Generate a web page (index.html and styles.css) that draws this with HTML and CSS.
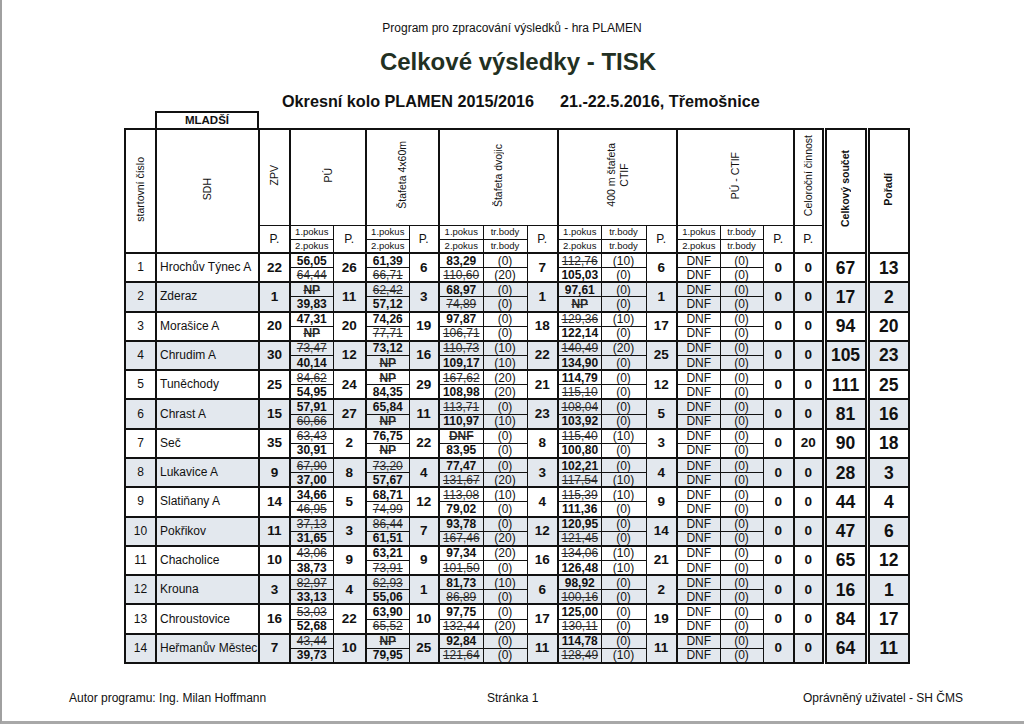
FILE: index.html
```html
<!DOCTYPE html>
<html lang="cs">
<head>
<meta charset="utf-8">
<title>Celkové výsledky - TISK</title>
<link rel="stylesheet" href="styles.css">
</head>
<body>
<div class="page">
  <div class="prog">Program pro zpracování výsledků - hra PLAMEN</div>
  <h1 class="title">Celkové výsledky - TISK</h1>
  <div class="sub"><span>Okresní kolo PLAMEN 2015/2016</span><span>21.-22.5.2016, Třemošnice</span></div>
  <div class="sheet">
    <div class="cat">MLADŠÍ</div>
    <table class="res">
      <colgroup>
        <col class="w31"><col class="w103"><col class="w31">
        <col class="w43"><col class="w33">
        <col class="w43"><col class="w30">
        <col class="w44"><col class="w44"><col class="w31">
        <col class="w43"><col class="w45"><col class="w31">
        <col class="w43"><col class="w43"><col class="w31">
        <col class="w30"><col class="w43"><col class="w42">
      </colgroup>
      <thead>
        <tr class="h1">
          <th rowspan="3"><div class="rot">startovní číslo</div></th>
          <th rowspan="3" class="gl"><div class="rot">SDH</div></th>
          <th class="gl"><div class="rot">ZPV</div></th>
          <th colspan="2" class="gl"><div class="rot">PÚ</div></th>
          <th colspan="2" class="gl"><div class="rot">Štafeta 4x60m</div></th>
          <th colspan="3" class="gl"><div class="rot">Štafeta dvojic</div></th>
          <th colspan="3" class="gl"><div class="rot">400 m štafeta<br>CTIF</div></th>
          <th colspan="3" class="gl"><div class="rot">PÚ - CTIF</div></th>
          <th class="gl"><div class="rot">Celoroční činnost</div></th>
          <th rowspan="3" class="dbl"><div class="rot bold">Celkový součet</div></th>
          <th rowspan="3" class="dbl"><div class="rot bold">Pořadí</div></th>
        </tr>
        <tr class="h2">
          <th rowspan="2" class="hp gl">P.</th>
          <th class="sm gl">1.pokus</th><th rowspan="2" class="hp">P.</th>
          <th class="sm gl">1.pokus</th><th rowspan="2" class="hp">P.</th>
          <th class="sm gl">1.pokus</th><th class="sm">tr.body</th><th rowspan="2" class="hp">P.</th>
          <th class="sm gl">1.pokus</th><th class="sm">tr.body</th><th rowspan="2" class="hp">P.</th>
          <th class="sm gl">1.pokus</th><th class="sm">tr.body</th><th rowspan="2" class="hp">P.</th>
          <th rowspan="2" class="hp gl">P.</th>
        </tr>
        <tr class="h3">
          <th class="sm gl">2.pokus</th>
          <th class="sm gl">2.pokus</th>
          <th class="sm gl">2.pokus</th><th class="sm">tr.body</th>
          <th class="sm gl">2.pokus</th><th class="sm">tr.body</th>
          <th class="sm gl">2.pokus</th><th class="sm">tr.body</th>
        </tr>
      </thead>
      <tbody>
        <!-- 1 -->
        <tr class="a">
          <td rowspan="2" class="num">1</td><td rowspan="2" class="name gl">Hrochův Týnec A</td><td rowspan="2" class="pt gl">22</td>
          <td class="v b gl">56,05</td><td rowspan="2" class="pt">26</td>
          <td class="v b gl">61,39</td><td rowspan="2" class="pt">6</td>
          <td class="v b gl">83,29</td><td class="t">(0)</td><td rowspan="2" class="pt">7</td>
          <td class="v x gl">112,76</td><td class="t">(10)</td><td rowspan="2" class="pt">6</td>
          <td class="v gl">DNF</td><td class="t">(0)</td><td rowspan="2" class="pt">0</td>
          <td rowspan="2" class="pt gl">0</td><td rowspan="2" class="sum dbl">67</td><td rowspan="2" class="sum dbl">13</td>
        </tr>
        <tr class="b">
          <td class="v x gl">64,44</td><td class="v x gl">66,71</td>
          <td class="v x gl">110,60</td><td class="t">(20)</td>
          <td class="v b gl">105,03</td><td class="t">(0)</td>
          <td class="v gl">DNF</td><td class="t">(0)</td>
        </tr>
        <!-- 2 -->
        <tr class="a sh">
          <td rowspan="2" class="num">2</td><td rowspan="2" class="name gl">Zderaz</td><td rowspan="2" class="pt gl">1</td>
          <td class="v xb gl">NP</td><td rowspan="2" class="pt">11</td>
          <td class="v x gl">62,42</td><td rowspan="2" class="pt">3</td>
          <td class="v b gl">68,97</td><td class="t">(0)</td><td rowspan="2" class="pt">1</td>
          <td class="v b gl">97,61</td><td class="t">(0)</td><td rowspan="2" class="pt">1</td>
          <td class="v gl">DNF</td><td class="t">(0)</td><td rowspan="2" class="pt">0</td>
          <td rowspan="2" class="pt gl">0</td><td rowspan="2" class="sum dbl">17</td><td rowspan="2" class="sum dbl">2</td>
        </tr>
        <tr class="b sh">
          <td class="v b gl">39,83</td><td class="v b gl">57,12</td>
          <td class="v x gl">74,89</td><td class="t">(0)</td>
          <td class="v xb gl">NP</td><td class="t">(0)</td>
          <td class="v gl">DNF</td><td class="t">(0)</td>
        </tr>
        <!-- 3 -->
        <tr class="a">
          <td rowspan="2" class="num">3</td><td rowspan="2" class="name gl">Morašice A</td><td rowspan="2" class="pt gl">20</td>
          <td class="v b gl">47,31</td><td rowspan="2" class="pt">20</td>
          <td class="v b gl">74,26</td><td rowspan="2" class="pt">19</td>
          <td class="v b gl">97,87</td><td class="t">(0)</td><td rowspan="2" class="pt">18</td>
          <td class="v x gl">129,36</td><td class="t">(10)</td><td rowspan="2" class="pt">17</td>
          <td class="v gl">DNF</td><td class="t">(0)</td><td rowspan="2" class="pt">0</td>
          <td rowspan="2" class="pt gl">0</td><td rowspan="2" class="sum dbl">94</td><td rowspan="2" class="sum dbl">20</td>
        </tr>
        <tr class="b">
          <td class="v xb gl">NP</td><td class="v x gl">77,71</td>
          <td class="v x gl">106,71</td><td class="t">(0)</td>
          <td class="v b gl">122,14</td><td class="t">(0)</td>
          <td class="v gl">DNF</td><td class="t">(0)</td>
        </tr>
        <!-- 4 -->
        <tr class="a sh">
          <td rowspan="2" class="num">4</td><td rowspan="2" class="name gl">Chrudim A</td><td rowspan="2" class="pt gl">30</td>
          <td class="v x gl">73,47</td><td rowspan="2" class="pt">12</td>
          <td class="v b gl">73,12</td><td rowspan="2" class="pt">16</td>
          <td class="v x gl">110,73</td><td class="t">(10)</td><td rowspan="2" class="pt">22</td>
          <td class="v x gl">140,49</td><td class="t">(20)</td><td rowspan="2" class="pt">25</td>
          <td class="v gl">DNF</td><td class="t">(0)</td><td rowspan="2" class="pt">0</td>
          <td rowspan="2" class="pt gl">0</td><td rowspan="2" class="sum dbl">105</td><td rowspan="2" class="sum dbl">23</td>
        </tr>
        <tr class="b sh">
          <td class="v b gl">40,14</td><td class="v xb gl">NP</td>
          <td class="v b gl">109,17</td><td class="t">(10)</td>
          <td class="v b gl">134,90</td><td class="t">(0)</td>
          <td class="v gl">DNF</td><td class="t">(0)</td>
        </tr>
        <!-- 5 -->
        <tr class="a">
          <td rowspan="2" class="num">5</td><td rowspan="2" class="name gl">Tuněchody</td><td rowspan="2" class="pt gl">25</td>
          <td class="v x gl">84,62</td><td rowspan="2" class="pt">24</td>
          <td class="v xb gl">NP</td><td rowspan="2" class="pt">29</td>
          <td class="v x gl">167,62</td><td class="t">(20)</td><td rowspan="2" class="pt">21</td>
          <td class="v b gl">114,79</td><td class="t">(0)</td><td rowspan="2" class="pt">12</td>
          <td class="v gl">DNF</td><td class="t">(0)</td><td rowspan="2" class="pt">0</td>
          <td rowspan="2" class="pt gl">0</td><td rowspan="2" class="sum dbl">111</td><td rowspan="2" class="sum dbl">25</td>
        </tr>
        <tr class="b">
          <td class="v b gl">54,95</td><td class="v b gl">84,35</td>
          <td class="v b gl">108,98</td><td class="t">(20)</td>
          <td class="v x gl">115,10</td><td class="t">(0)</td>
          <td class="v gl">DNF</td><td class="t">(0)</td>
        </tr>
        <!-- 6 -->
        <tr class="a sh">
          <td rowspan="2" class="num">6</td><td rowspan="2" class="name gl">Chrast A</td><td rowspan="2" class="pt gl">15</td>
          <td class="v b gl">57,91</td><td rowspan="2" class="pt">27</td>
          <td class="v b gl">65,84</td><td rowspan="2" class="pt">11</td>
          <td class="v x gl">113,71</td><td class="t">(0)</td><td rowspan="2" class="pt">23</td>
          <td class="v x gl">108,04</td><td class="t">(0)</td><td rowspan="2" class="pt">5</td>
          <td class="v gl">DNF</td><td class="t">(0)</td><td rowspan="2" class="pt">0</td>
          <td rowspan="2" class="pt gl">0</td><td rowspan="2" class="sum dbl">81</td><td rowspan="2" class="sum dbl">16</td>
        </tr>
        <tr class="b sh">
          <td class="v x gl">60,66</td><td class="v xb gl">NP</td>
          <td class="v b gl">110,97</td><td class="t">(10)</td>
          <td class="v b gl">103,92</td><td class="t">(0)</td>
          <td class="v gl">DNF</td><td class="t">(0)</td>
        </tr>
        <!-- 7 -->
        <tr class="a">
          <td rowspan="2" class="num">7</td><td rowspan="2" class="name gl">Seč</td><td rowspan="2" class="pt gl">35</td>
          <td class="v x gl">63,43</td><td rowspan="2" class="pt">2</td>
          <td class="v b gl">76,75</td><td rowspan="2" class="pt">22</td>
          <td class="v xb gl">DNF</td><td class="t">(0)</td><td rowspan="2" class="pt">8</td>
          <td class="v x gl">115,40</td><td class="t">(10)</td><td rowspan="2" class="pt">3</td>
          <td class="v gl">DNF</td><td class="t">(0)</td><td rowspan="2" class="pt">0</td>
          <td rowspan="2" class="pt gl">20</td><td rowspan="2" class="sum dbl">90</td><td rowspan="2" class="sum dbl">18</td>
        </tr>
        <tr class="b">
          <td class="v b gl">30,91</td><td class="v xb gl">NP</td>
          <td class="v b gl">83,95</td><td class="t">(0)</td>
          <td class="v b gl">100,80</td><td class="t">(0)</td>
          <td class="v gl">DNF</td><td class="t">(0)</td>
        </tr>
        <!-- 8 -->
        <tr class="a sh">
          <td rowspan="2" class="num">8</td><td rowspan="2" class="name gl">Lukavice A</td><td rowspan="2" class="pt gl">9</td>
          <td class="v x gl">67,90</td><td rowspan="2" class="pt">8</td>
          <td class="v x gl">73,20</td><td rowspan="2" class="pt">4</td>
          <td class="v b gl">77,47</td><td class="t">(0)</td><td rowspan="2" class="pt">3</td>
          <td class="v b gl">102,21</td><td class="t">(0)</td><td rowspan="2" class="pt">4</td>
          <td class="v gl">DNF</td><td class="t">(0)</td><td rowspan="2" class="pt">0</td>
          <td rowspan="2" class="pt gl">0</td><td rowspan="2" class="sum dbl">28</td><td rowspan="2" class="sum dbl">3</td>
        </tr>
        <tr class="b sh">
          <td class="v b gl">37,00</td><td class="v b gl">57,67</td>
          <td class="v x gl">131,67</td><td class="t">(20)</td>
          <td class="v x gl">117,54</td><td class="t">(10)</td>
          <td class="v gl">DNF</td><td class="t">(0)</td>
        </tr>
        <!-- 9 -->
        <tr class="a">
          <td rowspan="2" class="num">9</td><td rowspan="2" class="name gl">Slatiňany A</td><td rowspan="2" class="pt gl">14</td>
          <td class="v b gl">34,66</td><td rowspan="2" class="pt">5</td>
          <td class="v b gl">68,71</td><td rowspan="2" class="pt">12</td>
          <td class="v x gl">113,08</td><td class="t">(10)</td><td rowspan="2" class="pt">4</td>
          <td class="v x gl">115,39</td><td class="t">(10)</td><td rowspan="2" class="pt">9</td>
          <td class="v gl">DNF</td><td class="t">(0)</td><td rowspan="2" class="pt">0</td>
          <td rowspan="2" class="pt gl">0</td><td rowspan="2" class="sum dbl">44</td><td rowspan="2" class="sum dbl">4</td>
        </tr>
        <tr class="b">
          <td class="v x gl">46,95</td><td class="v x gl">74,99</td>
          <td class="v b gl">79,02</td><td class="t">(0)</td>
          <td class="v b gl">111,36</td><td class="t">(0)</td>
          <td class="v gl">DNF</td><td class="t">(0)</td>
        </tr>
        <!-- 10 -->
        <tr class="a sh">
          <td rowspan="2" class="num">10</td><td rowspan="2" class="name gl">Pokřikov</td><td rowspan="2" class="pt gl">11</td>
          <td class="v x gl">37,13</td><td rowspan="2" class="pt">3</td>
          <td class="v x gl">86,44</td><td rowspan="2" class="pt">7</td>
          <td class="v b gl">93,78</td><td class="t">(0)</td><td rowspan="2" class="pt">12</td>
          <td class="v b gl">120,95</td><td class="t">(0)</td><td rowspan="2" class="pt">14</td>
          <td class="v gl">DNF</td><td class="t">(0)</td><td rowspan="2" class="pt">0</td>
          <td rowspan="2" class="pt gl">0</td><td rowspan="2" class="sum dbl">47</td><td rowspan="2" class="sum dbl">6</td>
        </tr>
        <tr class="b sh">
          <td class="v b gl">31,65</td><td class="v b gl">61,51</td>
          <td class="v x gl">167,46</td><td class="t">(20)</td>
          <td class="v x gl">121,45</td><td class="t">(0)</td>
          <td class="v gl">DNF</td><td class="t">(0)</td>
        </tr>
        <!-- 11 -->
        <tr class="a">
          <td rowspan="2" class="num">11</td><td rowspan="2" class="name gl">Chacholice</td><td rowspan="2" class="pt gl">10</td>
          <td class="v x gl">43,06</td><td rowspan="2" class="pt">9</td>
          <td class="v b gl">63,21</td><td rowspan="2" class="pt">9</td>
          <td class="v b gl">97,34</td><td class="t">(20)</td><td rowspan="2" class="pt">16</td>
          <td class="v x gl">134,06</td><td class="t">(10)</td><td rowspan="2" class="pt">21</td>
          <td class="v gl">DNF</td><td class="t">(0)</td><td rowspan="2" class="pt">0</td>
          <td rowspan="2" class="pt gl">0</td><td rowspan="2" class="sum dbl">65</td><td rowspan="2" class="sum dbl">12</td>
        </tr>
        <tr class="b">
          <td class="v b gl">38,73</td><td class="v x gl">73,91</td>
          <td class="v x gl">101,50</td><td class="t">(0)</td>
          <td class="v b gl">126,48</td><td class="t">(10)</td>
          <td class="v gl">DNF</td><td class="t">(0)</td>
        </tr>
        <!-- 12 -->
        <tr class="a sh">
          <td rowspan="2" class="num">12</td><td rowspan="2" class="name gl">Krouna</td><td rowspan="2" class="pt gl">3</td>
          <td class="v x gl">82,97</td><td rowspan="2" class="pt">4</td>
          <td class="v x gl">62,93</td><td rowspan="2" class="pt">1</td>
          <td class="v b gl">81,73</td><td class="t">(10)</td><td rowspan="2" class="pt">6</td>
          <td class="v b gl">98,92</td><td class="t">(0)</td><td rowspan="2" class="pt">2</td>
          <td class="v gl">DNF</td><td class="t">(0)</td><td rowspan="2" class="pt">0</td>
          <td rowspan="2" class="pt gl">0</td><td rowspan="2" class="sum dbl">16</td><td rowspan="2" class="sum dbl">1</td>
        </tr>
        <tr class="b sh">
          <td class="v b gl">33,13</td><td class="v b gl">55,06</td>
          <td class="v x gl">86,89</td><td class="t">(0)</td>
          <td class="v x gl">100,16</td><td class="t">(0)</td>
          <td class="v gl">DNF</td><td class="t">(0)</td>
        </tr>
        <!-- 13 -->
        <tr class="a">
          <td rowspan="2" class="num">13</td><td rowspan="2" class="name gl">Chroustovice</td><td rowspan="2" class="pt gl">16</td>
          <td class="v x gl">53,03</td><td rowspan="2" class="pt">22</td>
          <td class="v b gl">63,90</td><td rowspan="2" class="pt">10</td>
          <td class="v b gl">97,75</td><td class="t">(0)</td><td rowspan="2" class="pt">17</td>
          <td class="v b gl">125,00</td><td class="t">(0)</td><td rowspan="2" class="pt">19</td>
          <td class="v gl">DNF</td><td class="t">(0)</td><td rowspan="2" class="pt">0</td>
          <td rowspan="2" class="pt gl">0</td><td rowspan="2" class="sum dbl">84</td><td rowspan="2" class="sum dbl">17</td>
        </tr>
        <tr class="b">
          <td class="v b gl">52,68</td><td class="v x gl">65,52</td>
          <td class="v x gl">132,44</td><td class="t">(20)</td>
          <td class="v x gl">130,11</td><td class="t">(0)</td>
          <td class="v gl">DNF</td><td class="t">(0)</td>
        </tr>
        <!-- 14 -->
        <tr class="a sh">
          <td rowspan="2" class="num">14</td><td rowspan="2" class="name gl">Heřmanův Městec</td><td rowspan="2" class="pt gl">7</td>
          <td class="v x gl">43,44</td><td rowspan="2" class="pt">10</td>
          <td class="v xb gl">NP</td><td rowspan="2" class="pt">25</td>
          <td class="v b gl">92,84</td><td class="t">(0)</td><td rowspan="2" class="pt">11</td>
          <td class="v b gl">114,78</td><td class="t">(0)</td><td rowspan="2" class="pt">11</td>
          <td class="v gl">DNF</td><td class="t">(0)</td><td rowspan="2" class="pt">0</td>
          <td rowspan="2" class="pt gl">0</td><td rowspan="2" class="sum dbl">64</td><td rowspan="2" class="sum dbl">11</td>
        </tr>
        <tr class="b sh">
          <td class="v b gl">39,73</td><td class="v b gl">79,95</td>
          <td class="v x gl">121,64</td><td class="t">(0)</td>
          <td class="v x gl">128,49</td><td class="t">(10)</td>
          <td class="v gl">DNF</td><td class="t">(0)</td>
        </tr>
      </tbody>
    </table>
  </div>
  <div class="foot">
    <span>Autor programu: Ing. Milan Hoffmann</span>
    <span>Stránka 1</span>
    <span class="right">Oprávněný uživatel - SH ČMS</span>
  </div>
</div>
</body>
</html>
```
FILE: styles.css
```css
* { box-sizing: border-box; }
html, body { margin: 0; padding: 0; background: #fff; }
body {
  font-family: "Liberation Sans", Arial, sans-serif;
  color: #111;
}
.page {
  width: 1024px;
  height: 724px;
  overflow: hidden;
  border-left: 2px solid #a0a0a0;
  border-bottom: 3px solid #a8a8a8;
}
.prog {
  margin-top: 21px;
  font-size: 12px;
  line-height: 14px;
  text-align: center;
  padding-right: 2px;
}
.title {
  margin: 13px 0 0 0;
  font-size: 24px;
  line-height: 28px;
  font-weight: bold;
  text-align: center;
  color: #223022;
  padding-left: 10px;
}
.sub {
  margin-top: 15px;
  display: flex;
  gap: 26px;
  padding-left: 280px;
  font-size: 16.2px;
  line-height: 20px;
  font-weight: bold;
}
.sheet {
  margin-top: 0;
  margin-left: 122px;
  width: 786px;
}
.cat {
  margin-left: 31px;
  width: 104px;
  height: 17px;
  border: 2px solid #111;
  border-bottom: none;
  font-size: 11.5px;
  font-weight: bold;
  line-height: 15px;
  text-align: center;
}
.res {
  width: 786px;
  table-layout: fixed;
  border-collapse: collapse;
  border: 2px solid #111;
}
.w30 { width: 30px; } .w31 { width: 31px; } .w33 { width: 33px; }
.w42 { width: 42px; } .w43 { width: 43px; } .w44 { width: 44px; }
.w45 { width: 45px; } .w103 { width: 103px; }

.res th, .res td {
  border: 1px solid #111;
  padding: 0;
  text-align: center;
  vertical-align: middle;
  overflow: hidden;
  white-space: nowrap;
}
.res th { font-weight: normal; }
.res .gl { border-left: 2px solid #111; }
.res .dbl { border-left: 5px double #111; }

.h1 { height: 96px; }
.h2, .h3 { height: 14px; }
.h3 th { border-bottom: 2px solid #111; }
.rot {
  display: inline-block;
  writing-mode: vertical-rl;
  transform: rotate(180deg);
  font-size: 10.5px;
  line-height: 13px;
  text-align: center;
}
.rot.bold { font-weight: bold; }
.sm { font-size: 9.5px; line-height: 12px; }
.hp { font-size: 12px; line-height: 13px; padding-top: 2px !important; }

.res tbody tr { height: 14.65px; }
.res tr.a > td { border-top: 2px solid #111; }
.res tr.sh { background: #e3e8ee; }

.num { font-size: 12px; line-height: 13px; }
.res .name { text-align: left; padding-left: 3px; font-size: 12px; line-height: 13px; }
.pt { font-size: 13.5px; font-weight: bold; line-height: 14px; }
.v { font-size: 12px; line-height: 12px; }
.v.b { font-weight: bold; }
.v.x { text-decoration: line-through; color: #2a2a2a; }
.v.xb { font-weight: bold; text-decoration: line-through; color: #2a2a2a; }
.t { font-size: 12px; line-height: 12px; }
.sum { font-size: 17.5px; font-weight: bold; line-height: 18px; }

.foot {
  margin-top: 27px;
  display: grid;
  grid-template-columns: 418px auto 1fr;
  padding-left: 67px;
  padding-right: 61px;
  font-size: 12px;
  line-height: 14px;
}
.foot .right { text-align: right; }
```
